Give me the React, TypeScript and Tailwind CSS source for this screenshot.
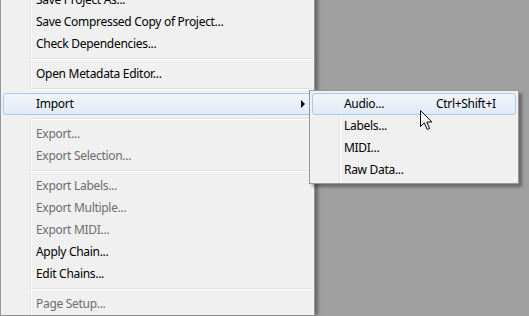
import React from 'react';

type Entry =
  | { kind: 'item'; label: string; disabled?: boolean; active?: boolean; sub?: boolean }
  | { kind: 'sep' };

const mainItems: Entry[] = [
  { kind: 'item', label: 'Save Project As...' },
  { kind: 'item', label: 'Save Compressed Copy of Project...' },
  { kind: 'item', label: 'Check Dependencies...' },
  { kind: 'sep' },
  { kind: 'item', label: 'Open Metadata Editor...' },
  { kind: 'sep' },
  { kind: 'item', label: 'Import', active: true, sub: true },
  { kind: 'sep' },
  { kind: 'item', label: 'Export...', disabled: true },
  { kind: 'item', label: 'Export Selection...', disabled: true },
  { kind: 'sep' },
  { kind: 'item', label: 'Export Labels...', disabled: true },
  { kind: 'item', label: 'Export Multiple...', disabled: true },
  { kind: 'item', label: 'Export MIDI...', disabled: true },
  { kind: 'item', label: 'Apply Chain...' },
  { kind: 'item', label: 'Edit Chains...' },
  { kind: 'sep' },
  { kind: 'item', label: 'Page Setup...', disabled: true },
];

const subItems = [
  { label: 'Audio...', shortcut: 'Ctrl+Shift+I', active: true },
  { label: 'Labels...' },
  { label: 'MIDI...' },
  { label: 'Raw Data...' },
];

const highlight =
  'rounded-[3px] border border-[#a8caf0] bg-gradient-to-b from-[#f1f5fb] to-[#e1ebf8]';

function Separator() {
  return (
    <div className="h-[8px] flex flex-col justify-center pl-[28px]">
      <div className="h-px bg-[#e0e0e0]" />
      <div className="h-px bg-white" />
    </div>
  );
}

function Cursor() {
  return (
    <svg
      className="absolute left-[420px] top-[110px]"
      width="13"
      height="21"
      viewBox="0 0 13 21"
    >
      <path
        d="M0.5 0.5 L0.5 16.5 L4.3 12.8 L7.2 19.5 L9.6 18.5 L6.8 12 L11.8 12 Z"
        fill="#fff"
        stroke="#000"
        strokeWidth="1"
        strokeLinejoin="round"
      />
    </svg>
  );
}

export default function App() {
  return (
    <div
      className="relative w-[529px] h-[316px] overflow-hidden bg-[#a0a0a0] text-[12px] tracking-[-0.3px]"
      style={{ fontFamily: '"Noto Sans", "Open Sans", sans-serif' }}
    >
      {/* main menu */}
      <div className="relative -mt-[11px] w-[315px] border-l border-r border-[#979797] bg-[#f0f0f0] px-[1px] shadow-[3px_0_3px_rgba(0,0,0,0.35)]">
        <div className="absolute left-[29px] top-0 bottom-0 flex">
          <div className="w-px bg-[#e2e3e3]" />
          <div className="w-px bg-white" />
        </div>
        <div className="relative">
          {mainItems.map((e, i) =>
            e.kind === 'sep' ? (
              <Separator key={i} />
            ) : (
              <div
                key={i}
                className={`mx-[1px] h-[22px] flex items-center pl-[32px] pr-[6px] ${
                  e.active ? highlight : 'border border-transparent'
                } ${e.disabled ? 'text-[#6d6d6d]' : 'text-black'}`}
              >
                <span className="leading-none">{e.label}</span>
                {e.sub && (
                  <span className="ml-auto w-0 h-0 border-y-[4px] border-y-transparent border-l-[4px] border-l-black" />
                )}
              </div>
            )
          )}
        </div>
      </div>

      {/* submenu */}
      <div className="absolute left-[309px] top-[90px] w-[210px] border border-[#979797] bg-[#f0f0f0] p-[2px] shadow-[3px_3px_3px_rgba(0,0,0,0.35)]">
        <div className="absolute left-[29px] top-0 bottom-0 flex">
          <div className="w-px bg-[#e2e3e3]" />
          <div className="w-px bg-white" />
        </div>
        <div className="relative">
          {subItems.map((s, i) => (
            <div
              key={i}
              className={`h-[22px] grid grid-cols-[92px_1fr] items-center pl-[31px] text-black ${
                s.active ? highlight : 'border border-transparent'
              }`}
            >
              <span className="leading-none">{s.label}</span>
              <span className="leading-none">{s.shortcut}</span>
            </div>
          ))}
        </div>
      </div>

      <Cursor />
    </div>
  );
}
